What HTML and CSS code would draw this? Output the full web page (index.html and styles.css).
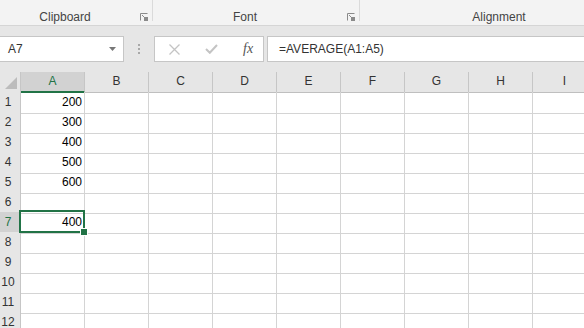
FILE: index.html
```html
<!DOCTYPE html>
<html lang="en">
<head>
  <meta charset="UTF-8">
  <meta name="viewport" content="width=device-width, initial-scale=1.0">
  <title>Book1 - Excel</title>
  <link rel="stylesheet" href="styles.css">
</head>
<body>
  <div class="ribbon">
    <div class="group clipboard">
      <span class="label">Clipboard</span>
      <svg class="launcher" width="8" height="8" viewBox="0 0 8 8"><path d="M0.5 7.5V0.5H7.5" fill="none" stroke="#8a8a8a"/><path d="M2 2L6 6" stroke="#8a8a8a"/><rect x="4" y="4" width="4" height="4" fill="#8a8a8a"/></svg>
    </div>
    <div class="group font">
      <span class="label">Font</span>
      <svg class="launcher" width="8" height="8" viewBox="0 0 8 8"><path d="M0.5 7.5V0.5H7.5" fill="none" stroke="#8a8a8a"/><path d="M2 2L6 6" stroke="#8a8a8a"/><rect x="4" y="4" width="4" height="4" fill="#8a8a8a"/></svg>
    </div>
    <div class="group alignment">
      <span class="label">Alignment</span>
    </div>
  </div>

  <div class="formula-bar">
    <div class="name-box">
      <span>A7</span>
      <svg width="7" height="4" viewBox="0 0 7 4"><path d="M0 0H7L3.5 4Z" fill="#777"/></svg>
    </div>
    <div class="grip"><i></i><i></i><i></i></div>
    <div class="fx-buttons">
      <svg class="btn" width="11" height="11" viewBox="0 0 11 11"><path d="M0.5 0.5L10.5 10.5M10.5 0.5L0.5 10.5" stroke="#c4c4c4" stroke-width="1.3"/></svg>
      <svg class="btn" width="13" height="10" viewBox="0 0 13 10"><path d="M1 5L4.8 8.8L12 1" fill="none" stroke="#c4c4c4" stroke-width="2"/></svg>
      <span class="fx">fx</span>
    </div>
    <div class="formula-input">=AVERAGE(A1:A5)</div>
  </div>

  <div class="sheet">
    <div class="row head">
      <div class="corner"><span class="tri"></span></div>
      <div class="ch sel">A</div><div class="ch">B</div><div class="ch">C</div><div class="ch">D</div><div class="ch">E</div>
      <div class="ch">F</div><div class="ch">G</div><div class="ch">H</div><div class="ch">I</div>
    </div>
    <div class="row"><div class="rh">1</div><div class="c">200</div><div class="c"></div><div class="c"></div><div class="c"></div><div class="c"></div><div class="c"></div><div class="c"></div><div class="c"></div><div class="c"></div></div>
    <div class="row"><div class="rh">2</div><div class="c">300</div><div class="c"></div><div class="c"></div><div class="c"></div><div class="c"></div><div class="c"></div><div class="c"></div><div class="c"></div><div class="c"></div></div>
    <div class="row"><div class="rh">3</div><div class="c">400</div><div class="c"></div><div class="c"></div><div class="c"></div><div class="c"></div><div class="c"></div><div class="c"></div><div class="c"></div><div class="c"></div></div>
    <div class="row"><div class="rh">4</div><div class="c">500</div><div class="c"></div><div class="c"></div><div class="c"></div><div class="c"></div><div class="c"></div><div class="c"></div><div class="c"></div><div class="c"></div></div>
    <div class="row"><div class="rh">5</div><div class="c">600</div><div class="c"></div><div class="c"></div><div class="c"></div><div class="c"></div><div class="c"></div><div class="c"></div><div class="c"></div><div class="c"></div></div>
    <div class="row"><div class="rh">6</div><div class="c"></div><div class="c"></div><div class="c"></div><div class="c"></div><div class="c"></div><div class="c"></div><div class="c"></div><div class="c"></div><div class="c"></div></div>
    <div class="row"><div class="rh sel">7</div><div class="c active">400<span class="selection"><span class="handle"></span></span></div><div class="c"></div><div class="c"></div><div class="c"></div><div class="c"></div><div class="c"></div><div class="c"></div><div class="c"></div><div class="c"></div></div>
    <div class="row"><div class="rh">8</div><div class="c"></div><div class="c"></div><div class="c"></div><div class="c"></div><div class="c"></div><div class="c"></div><div class="c"></div><div class="c"></div><div class="c"></div></div>
    <div class="row"><div class="rh">9</div><div class="c"></div><div class="c"></div><div class="c"></div><div class="c"></div><div class="c"></div><div class="c"></div><div class="c"></div><div class="c"></div><div class="c"></div></div>
    <div class="row"><div class="rh">10</div><div class="c"></div><div class="c"></div><div class="c"></div><div class="c"></div><div class="c"></div><div class="c"></div><div class="c"></div><div class="c"></div><div class="c"></div></div>
    <div class="row"><div class="rh">11</div><div class="c"></div><div class="c"></div><div class="c"></div><div class="c"></div><div class="c"></div><div class="c"></div><div class="c"></div><div class="c"></div><div class="c"></div></div>
    <div class="row"><div class="rh">12</div><div class="c"></div><div class="c"></div><div class="c"></div><div class="c"></div><div class="c"></div><div class="c"></div><div class="c"></div><div class="c"></div><div class="c"></div></div>
  </div>
</body>
</html>
```

FILE: styles.css
```css
* {
  box-sizing: border-box;
}
body {
  margin: 0;
  font-family: "Liberation Sans", Arial, sans-serif;
  font-size: 12px;
  color: #333;
  background-color: #ffffff;
  overflow: hidden;
  width: 584px;
  height: 328px;
}

/* ribbon group labels */
.ribbon {
  display: flex;
  height: 26px;
  background-color: #f3f3f3;
  border-bottom: 1px solid #d5d5d5;
}
.group {
  display: flex;
  align-items: flex-start;
  flex-shrink: 0;
  height: 21px;
  border-right: 1px solid #dadada;
}
.group.clipboard {
  width: 153px;
}
.group.font {
  width: 207px;
}
.group.alignment {
  width: 300px;
  border-right: none;
  padding-right: 22px;
}
.label {
  flex: 1;
  text-align: center;
  padding-top: 10px;
  line-height: 15px;
  color: #444;
}
.launcher {
  margin: 13px 4px 0 10px;
}

/* name box + formula */
.formula-bar {
  display: flex;
  align-items: flex-start;
  height: 46px;
  padding-top: 10px;
  background-color: #e6e6e6;
}
.name-box {
  display: flex;
  align-items: center;
  justify-content: space-between;
  width: 125px;
  height: 26px;
  margin-left: -1px;
  padding: 0 7px 1px 8px;
  background-color: #fff;
  border: 1px solid #c6c6c6;
  line-height: 24px;
}
.grip {
  display: flex;
  flex-direction: column;
  gap: 2px;
  margin: 8px 14px 0 14px;
}
.grip i {
  display: block;
  width: 2px;
  height: 2px;
  background-color: #a8a8a8;
}
.fx-buttons {
  display: flex;
  align-items: center;
  width: 110px;
  height: 26px;
  padding-left: 14px;
  background-color: #fff;
  border: 1px solid #c6c6c6;
}
.fx-buttons .btn {
  margin-right: 23px;
}
.fx-buttons .btn + .btn {
  margin-left: 2px;
  margin-right: 25px;
}
.fx {
  font-family: "Liberation Serif", "Times New Roman", serif;
  font-style: italic;
  font-size: 14px;
  color: #555;
  margin-top: -1px;
}
.formula-input {
  flex: 1;
  height: 26px;
  margin-left: 3px;
  padding-left: 11px;
  line-height: 24px;
  background-color: #fff;
  border: 1px solid #c6c6c6;
  border-right: none;
  color: #333;
}

/* grid */
.sheet {
  overflow: hidden;
}
.row {
  display: grid;
  grid-template-columns: 21px repeat(9, 64px);
  height: 20px;
}
.corner,
.ch,
.rh {
  background-color: #e6e6e6;
  border-right: 1px solid #c6c6c6;
  border-bottom: 1px solid #bfbfbf;
}
.corner {
  display: flex;
  justify-content: flex-end;
  align-items: flex-end;
  padding: 0 3px 3px 0;
}
.tri {
  width: 0;
  height: 0;
  border-left: 12px solid transparent;
  border-bottom: 12px solid #bcbcbc;
}
.ch {
  text-align: center;
  line-height: 19px;
  color: #333;
}
.ch.sel {
  background-color: #d2d2d2;
  color: #217346;
  border-bottom: 2px solid #217346;
}
.rh {
  text-align: center;
  padding-right: 4px;
  line-height: 21px;
  color: #333;
  border-bottom-color: #c6c6c6;
}
.rh.sel {
  background-color: #d2d2d2;
  color: #217346;
}
.c {
  position: relative;
  text-align: right;
  padding-right: 2px;
  line-height: 21px;
  color: #000;
  border-right: 1px solid #d4d4d4;
  border-bottom: 1px solid #d4d4d4;
}
.c.active {
  z-index: 2;
}
.selection {
  position: absolute;
  left: -2px;
  top: -2px;
  width: 66px;
  height: 23px;
  border: 2px solid #217346;
}
.handle {
  position: absolute;
  right: -5px;
  bottom: -5px;
  width: 8px;
  height: 8px;
  background-color: #217346;
  border: 1px solid #fff;
}
```
